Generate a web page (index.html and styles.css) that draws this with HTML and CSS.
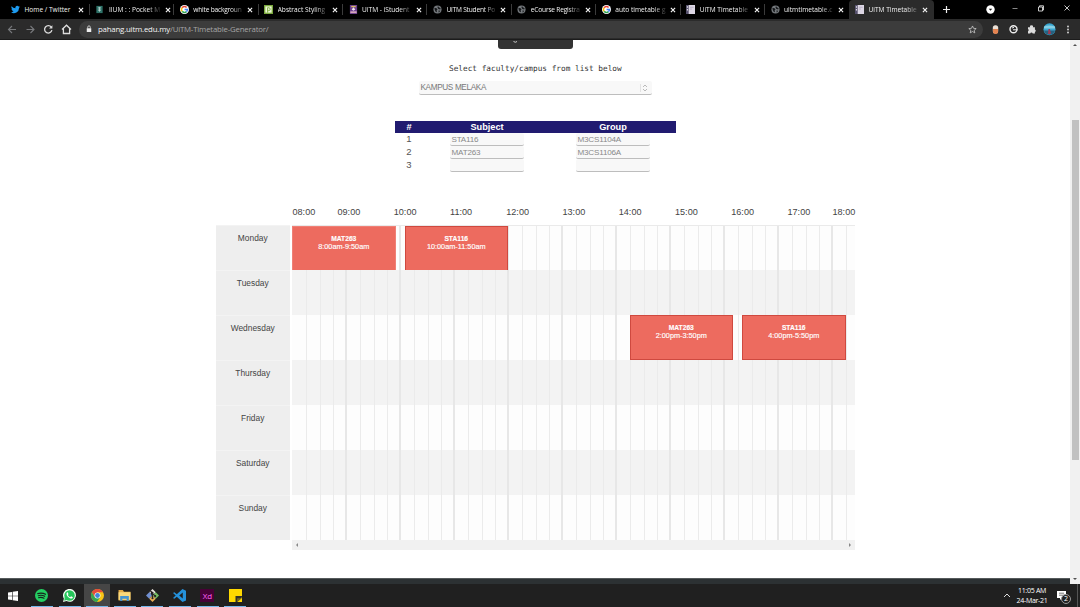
FILE: index.html
```html
<!DOCTYPE html>
<html lang="en">
<head>
<meta charset="utf-8">
<title>UiTM Timetable Generator</title>
<link rel="stylesheet" href="styles.css">
</head>
<body>
<svg class="defs" width="0" height="0">
  <symbol id="google" viewBox="0 0 20 20"><circle cx="10" cy="10" r="10" fill="#fff"/><g fill="none" stroke-width="3.4"><path d="M4.800 6A6.500 6.500 0 0 1 14.600 5.400" stroke="#ea4335"/><path d="M4.800 14A6.500 6.500 0 0 1 4.800 6" stroke="#fbbc05"/><path d="M14.400 14.800A6.500 6.500 0 0 1 4.800 14" stroke="#34a853"/><path d="M10.200 10H16.500A6.500 6.500 0 0 1 14.200 15" stroke="#4285f4"/></g></symbol>
  <symbol id="globe" viewBox="0 0 20 20"><circle cx="10" cy="10" r="9" fill="#74787c"/><path d="M3 6l5 1 2 3-2 2 1 4-3-1-2-4zM11 2l2 3 4 2-1 3-4-1-2-3zM12 12l4 1-3 4z" fill="#17191b"/></symbol>
  <symbol id="page" viewBox="0 0 20 20"><path d="M0 0H20V20H0z" fill="#dcd6e4"/><path d="M0 0H6V20H0z" fill="#55506c"/><path d="M2 3h2v3H2zM2 9h2v3H2z" fill="#fff"/><path d="M9 5h8M9 9h4" stroke="#a79db6" stroke-width="1.500"/></symbol>
  <symbol id="close" viewBox="0 0 10 10"><path d="M1.500 1.500l7 7M8.500 1.500l-7 7" stroke="#f4f4f4" stroke-width="1.900"/></symbol>
</svg>

<header class="browser">
  <div class="tabs">
    <div class="tab"><svg class="fav" viewBox="0 0 24 24"><path fill="#1d9bf0" d="M24 4.600a10 10 0 0 1-2.800.8 5 5 0 0 0 2.100-2.700 10 10 0 0 1-3.100 1.200 4.900 4.900 0 0 0-8.400 4.500A14 14 0 0 1 1.700 3.200a4.900 4.900 0 0 0 1.500 6.500A4.900 4.900 0 0 1 1 9.100a4.900 4.900 0 0 0 3.900 4.900 5 5 0 0 1-2.200.1 4.900 4.900 0 0 0 4.600 3.400A10 10 0 0 1 0 19.500 14 14 0 0 0 21.500 7.100 10 10 0 0 0 24 4.600z"/></svg><span class="title">Home / Twitter</span><svg class="x"><use href="#close"/></svg></div>
    <div class="tab"><svg class="fav" viewBox="0 0 20 20"><path fill="#2e7268" d="M3 2h14v16H3z"/><path d="M7 6h6M7 9h6M7 12h6M10 5v10" stroke="#c9e0dc" stroke-width="1.500"/></svg><span class="title">IIUM : : Pocket M</span><svg class="x"><use href="#close"/></svg></div>
    <div class="tab"><svg class="fav"><use href="#google"/></svg><span class="title tight">white backgroun</span><svg class="x"><use href="#close"/></svg></div>
    <div class="tab"><svg class="fav" viewBox="0 0 20 20"><path fill="#7aa83c" d="M0 0h20v20H0z"/><path fill="#edf8d6" d="M3 3h14v14H3z"/><path d="M8 17V6h2.500a3 3 0 0 1 0 6.500H8" stroke="#7aa83c" stroke-width="2" fill="none"/></svg><span class="title">Abstract Styling</span><svg class="x"><use href="#close"/></svg></div>
    <div class="tab"><svg class="fav" viewBox="0 0 20 20"><path fill="#6b3e8d" d="M2 0h16v20H2z"/><path d="M5 2h10v3H5z" fill="#d8b95c"/><path d="M10 5l4 5-4 3-4-3z" fill="#f1e7f4"/><path d="M3 14h14v4H3z" fill="#d6a6bd"/></svg><span class="title">UiTM - iStudent</span><svg class="x"><use href="#close"/></svg></div>
    <div class="tab"><svg class="fav"><use href="#globe"/></svg><span class="title tight">UiTM Student Po</span><svg class="x"><use href="#close"/></svg></div>
    <div class="tab"><svg class="fav"><use href="#globe"/></svg><span class="title tight">eCourse Registra</span><svg class="x"><use href="#close"/></svg></div>
    <div class="tab"><svg class="fav"><use href="#google"/></svg><span class="title">auto timetable g</span><svg class="x"><use href="#close"/></svg></div>
    <div class="tab"><svg class="fav"><use href="#page"/></svg><span class="title">UiTM Timetable</span><svg class="x"><use href="#close"/></svg></div>
    <div class="tab before-active"><svg class="fav"><use href="#globe"/></svg><span class="title">uitmtimetable.c</span><svg class="x"><use href="#close"/></svg></div>
    <div class="tab active"><svg class="fav"><use href="#page"/></svg><span class="title">UiTM Timetable</span><svg class="x"><use href="#close"/></svg></div>
    <svg class="window-tools" viewBox="934 0 146 19" width="146" height="19">
      <path d="M943 9.500h7M946.500 6v7" stroke="#eee" stroke-width="1.200"/>
      <circle cx="990.500" cy="9.500" r="4.200" fill="#fff"/><path d="M988.800 8.700h3.400l-1.700 2z" fill="#111"/>
      <path d="M1012.500 8.500h5" stroke="#aaa" stroke-width=".8"/>
      <path d="M1038.500 7h4v4h-4zM1039.500 7V5.800h4V10h-1" fill="none" stroke="#ddd" stroke-width=".9"/>
      <path d="M1064.500 5.500l5 5M1069.500 5.500l-5 5" stroke="#ddd" stroke-width=".9"/>
    </svg>
  </div>
  <div class="toolbar">
    <svg class="nav" viewBox="0 19 79 21" width="79" height="21" fill="none">
      <path d="M16 29.500H8.500M12 26l-3.500 3.500L12 33M26.500 29.500H34M30.500 26l3.500 3.500-3.500 3.500" stroke="#77797c" stroke-width="1.100"/>
      <path d="M51.300 27.200A3.700 3.700 0 1 0 51.900 30.200" stroke="#ddd" stroke-width="1.300"/><path d="M52.400 25.200v3.400H49z" fill="#ddd"/>
      <path d="M62 29.500l4.500-4.300 4.500 4.300M63.400 28.500V33.500h6.200V28.500" stroke="#ddd" stroke-width="1.300"/>
    </svg>
    <div class="address">
      <svg class="lock" viewBox="0 0 8 10"><path d="M1 4h6v5H1z" fill="#eee"/><path d="M2.300 4V2.500a1.700 1.700 0 0 1 3.400 0V4" fill="none" stroke="#eee"/></svg>
      <div class="url"><b>pahang.uitm.edu.my</b>/UiTM-Timetable-Generator/</div>
      <svg class="star" viewBox="0 0 24 24"><path d="M12 2.500l2.800 6.400 7 .6-5.300 4.600 1.600 6.900-6.100-3.700L5.900 21l1.600-6.900-5.300-4.600 7-.6z" fill="none" stroke="#d0d0d0" stroke-width="2"/></svg>
    </div>
    <svg class="extensions" viewBox="984 19 96 21" width="96" height="21">
      <rect x="992.800" y="25.200" width="5.400" height="8.400" rx="2.500" fill="#eadfd6"/><path d="M993 29h5v2.500a2.400 2.400 0 0 1-5 0z" fill="#e58350"/>
      <circle cx="1013.500" cy="29.300" r="3.500" fill="none" stroke="#eee" stroke-width="1.400"/><path d="M1013 29.800h4.500M1012 28l2-.6" stroke="#eee"/>
      <path d="M1028 27.200h2.100a1.500 1.500 0 1 1 2.800 0h2v2.200a1.400 1.400 0 0 1 0 2.600v1.500h-2.200a1.300 1.300 0 0 0-2.500 0h-2.200V31.200a1.300 1.300 0 0 0 0-2.300z" fill="#ddd"/>
      <circle cx="1049.500" cy="29.200" r="6" fill="#39a5cf"/><path d="M1044 26.500q5-2 11 0v2h-11z" fill="#85cfe5"/><path d="M1043.800 30.500h11.500a6 6 0 0 1-11.500 0z" fill="#27617f"/><path d="M1048.500 29h1.500l1 5h-3z" fill="#a03b55"/>
      <g fill="#ddd"><circle cx="1068" cy="26.500" r=".9"/><circle cx="1068" cy="29.500" r=".9"/><circle cx="1068" cy="32.500" r=".9"/></g>
    </svg>
  </div>
</header>

<div class="viewport">
  <main class="page">
    <div class="generate"><svg width="75" height="9"><path d="M15.500 1.500q2 1.500 3.500 0" fill="none" stroke="#ccc"/></svg></div>
    <p class="prompt">Select faculty/campus from list below</p>
    <div class="campus"><span>KAMPUS MELAKA</span><svg viewBox="0 0 12 10" width="12" height="10"><path d="M.5 1v8" stroke="#e2e2e2"/><path d="M3 4l2-2 2 2M3 6l2 2 2-2" fill="none" stroke="#aaa" stroke-width=".8"/></svg></div>

    <div class="subjects">
      <div class="subject head"><b>#</b><b>Subject</b><b>Group</b></div>
      <div class="subject"><span>1</span><div class="field">STA116</div><div class="field">M3CS1104A</div></div>
      <div class="subject"><span>2</span><div class="field">MAT263</div><div class="field">M3CS1106A</div></div>
      <div class="subject"><span>3</span><div class="field"></div><div class="field"></div></div>
    </div>

    <section class="timetable">
      <div class="hours"><span>08:00</span><span>09:00</span><span>10:00</span><span>11:00</span><span>12:00</span><span>13:00</span><span>14:00</span><span>15:00</span><span>16:00</span><span>17:00</span><span>18:00</span></div>
      <div class="day"><div class="name">Monday</div><div class="slots"><div class="event pale" style="left:0"><b>MAT263</b>8:00am-9:50am</div><div class="event" style="left:112.500px"><b>STA116</b>10:00am-11:50am</div></div></div>
      <div class="day"><div class="name">Tuesday</div><div class="slots"></div></div>
      <div class="day"><div class="name">Wednesday</div><div class="slots"><div class="event" style="left:337.500px"><b>MAT263</b>2:00pm-3:50pm</div><div class="event" style="left:450px"><b>STA116</b>4:00pm-5:50pm</div></div></div>
      <div class="day"><div class="name">Thursday</div><div class="slots"></div></div>
      <div class="day"><div class="name">Friday</div><div class="slots"></div></div>
      <div class="day"><div class="name">Saturday</div><div class="slots"></div></div>
      <div class="day"><div class="name">Sunday</div><div class="slots"></div></div>
      <div class="hscroll"><svg viewBox="0 0 4 6"><path d="M3 1v4L1 3z"/></svg><svg viewBox="0 0 4 6"><path d="M1 1v4l2-2z"/></svg></div>
    </section>
    <footer class="footer"></footer>
  </main>
  <div class="vscroll"><svg viewBox="0 0 6 4"><path d="M1 3h4L3 1z"/></svg><div class="thumb"></div><svg viewBox="0 0 6 4"><path d="M1 1h4L3 3z"/></svg></div>
</div>

<div class="taskbar">
  <div class="app start"><svg viewBox="0 0 16 16"><path fill="#fff" d="M0 2.300l6.500-.9v6H0zM7.500 1.200L16 0v7.400H7.500zM0 8.500h6.500v6L0 13.700zM7.500 8.500H16V16l-8.500-1.200z"/></svg></div>
  <div class="app open"><svg viewBox="0 0 24 24"><circle cx="12" cy="12" r="12" fill="#24cf62"/><path d="M5 8.500q8-2.200 14.500 1.300M6 12.300q6.500-1.800 12 1.200M6.500 16q5.500-1.500 10.200 1" stroke="#18231c" stroke-width="2" fill="none" stroke-linecap="round"/></svg></div>
  <div class="app open"><svg viewBox="0 0 24 24"><path d="M0 24l1.700-6.200A11.900 11.900 0 1 1 6.400 22.300z" fill="#f5fff5"/><circle cx="12.100" cy="11.900" r="9.700" fill="#25c65a"/><path d="M3.200 15l-.9 6.500 6-1.600z" fill="#25c65a"/><path d="M8 5.800c-3 2.200-.8 6.700 2 9.200 2.800 2.700 6.500 4 8 1.200.5-1-.2-1.600-3-2.700-.8-.1-1.200 1.800-2 1.500-2-.8-3.300-2.400-4-4 .2-.6 1.200-1 1-1.800-.8-2.600-1.200-3.400-2-3.400z" fill="#fff"/></svg></div>
  <div class="app open current"><svg viewBox="0 0 24 24"><circle cx="12" cy="12" r="12" fill="#f9c515"/><path d="M1.600 6A12 12 0 0 1 22.400 6H12L7 15z" fill="#e54b3c"/><path d="M1.600 6a12 12 0 0 0 9.400 18l6-9-10 0z" fill="#35a653"/><circle cx="12" cy="12" r="5.500" fill="#fff"/><circle cx="12" cy="12" r="4.400" fill="#4285d8"/></svg></div>
  <div class="app open"><svg viewBox="0 0 24 24"><path d="M1 2h8l2 3h12v16H1z" fill="#e4ac45"/><path d="M1 6h22v14H1z" fill="#fbd97b"/><path d="M4 13h16v9h-4v-4H8v4H4z" fill="#4795d0"/></svg></div>
  <div class="app open"><svg viewBox="0 0 24 24"><path d="M12 0l6 6-6 6-6-6z" fill="#e8e5df"/><path d="M6 6l6 6-6 6-6-6z" fill="#708fd0"/><path d="M18 6l6 6-6 6-6-6z" fill="#75bd63"/><path d="M12 12l6 6-6 6-6-6z" fill="#e8ae56"/><path d="M8 3l4 4v10M12 8l5 5" stroke="#282225" stroke-width="2"/><g fill="#282225"><circle cx="12" cy="7" r="2"/><circle cx="12" cy="17" r="2"/><circle cx="17" cy="13" r="2"/></g></svg></div>
  <div class="app open"><svg viewBox="0 0 24 24"><path d="M17.500 0L24 3v18l-6.500 3L7 14.200 2.500 18 0 16.500 5 12 0 7.500 2.500 6 7 9.800zM18 6.500L11.500 12l6.500 5.500z" fill="#2592dc" fill-rule="evenodd"/></svg></div>
  <div class="app open"><div class="xd">Xd</div></div>
  <div class="app open"><svg viewBox="0 0 24 24"><path d="M0 0h24v24H0z" fill="#ffd900"/><path d="M12 13h12v2l-9 9h-3z" fill="#333229"/><path d="M15 24v-7h9z" fill="#77691d"/></svg></div>
  <div class="tray">
    <svg viewBox="0 0 8 5" width="8" height="5"><path d="M1 4l3-3 3 3" fill="none" stroke="#ddd"/></svg>
    <div class="clock"><div>11:05 AM</div><div>24-Mar-21</div></div>
    <div class="notice"><svg viewBox="0 0 10 10" width="10" height="10"><path d="M0 0h9v7H5L3 9V7H0z" fill="#fff"/><path d="M2 2.200h5M2 4.200h5" stroke="#555" stroke-width=".8"/></svg><i>2</i></div>
    <div class="peek"></div>
  </div>
</div>
</body>
</html>
```
FILE: styles.css
```css
* { box-sizing: border-box; }
body { margin: 0; width: 1080px; height: 607px; overflow: hidden; display: flex; flex-direction: column; background: #fff; font-family: "Liberation Sans", Arial, sans-serif; }
svg { display: block; flex: none; }
.defs { display: none; }

.browser { flex: none; height: 40px; background: #2b2b2b; border-bottom: 1px solid #1c1c1c; }
.tabs { display: flex; height: 19px; background: #000; padding-left: 5.500px; font: 6.600px "Open Sans", sans-serif; color: #f2f2f2; }
.tab { flex: none; width: 84.400px; height: 19px; padding: 0 5.500px 0 5.500px; display: flex; align-items: center; position: relative; }
.tab::after { content: ""; position: absolute; right: 0; top: 4px; width: 1px; height: 11px; background: #3b3b3b; }
.tab.active::after, .tab.before-active::after { display: none; }
.tab.active { background: #2b2b2b; border-radius: 4px 4px 0 0; }
.fav { width: 9px; height: 9px; margin-right: 4.500px; }
.title { flex: 1; white-space: nowrap; -webkit-mask-image: linear-gradient(90deg, #000 75%, rgba(0,0,0,.15)); mask-image: linear-gradient(90deg, #000 75%, rgba(0,0,0,.15)); }
.title.tight { letter-spacing: -.200px; }
.tab:first-child .title { -webkit-mask-image: none; mask-image: none; }
.x { width: 6px; height: 6px; margin-left: 4.500px; }
.window-tools { margin-left: auto; }
.toolbar { display: flex; height: 20px; }
.address { width: 904px; height: 16.500px; margin-top: 2px; border-radius: 9px; background: #3c3c3c; display: flex; align-items: center; padding: 0 6px 0 7px; color: #a6a6a6; }
.lock { width: 6px; height: 8px; margin-right: 6px; }
.url { flex: 1; font: 7.800px "Open Sans", sans-serif; letter-spacing: -.180px; }
.url b { font-weight: 400; color: #f4f4f4; }
.star { width: 9px; height: 9px; }
.extensions { margin-left: 1px; }

.viewport { height: 544px; display: flex; }
.page { width: 1070px; display: flex; flex-direction: column; background: #fff; }
.generate { width: 75px; height: 9px; margin-left: 498px; border-radius: 0 0 3px 3px; background: #333; }
.prompt { margin: 14px 0 0 449px; height: 12px; font: 7.750px/12px "DejaVu Sans Mono", monospace; color: #333; white-space: nowrap; }
.campus { width: 233px; height: 14px; margin: 6px 0 0 419px; background: #f8f8f8; border-bottom: 1.500px solid #bdbdbd; border-radius: 2px; display: flex; justify-content: space-between; align-items: center; font-size: 8.200px; letter-spacing: -.350px; color: #777; padding-left: 1.500px; }
.subjects { width: 281px; margin: 26px 0 0 395px; }
.subject { height: 12.800px; display: grid; grid-template-columns: 28px 27px 74px 52px 74px; grid-template-areas: "n . s . g"; align-items: start; font-size: 9.500px; line-height: 12px; color: #555; }
.subject > :nth-child(1) { grid-area: n; text-align: center; }
.subject > :nth-child(2) { grid-area: s; }
.subject > :nth-child(3) { grid-area: g; }
.subject.head { height: 12px; background: #211b70; color: #fff; font-size: 9.200px; line-height: 12px; }
.head b { text-align: center; }
.field { height: 13px; background: #f8f8f8; border-bottom: 1px solid #bdbdbd; border-radius: 2px; padding-left: 1.500px; font-size: 8.100px; letter-spacing: -.200px; line-height: 13px; color: #888; }

.timetable { width: 639.500px; margin: 35px 0 0 215.500px; }
.hours { height: 19px; padding-left: 77px; display: grid; grid-template-columns: 45px repeat(8, 56.250px) 45px 30px; font-size: 9.100px; line-height: 12px; color: #444; white-space: nowrap; }
.day { display: flex; gap: 2px; height: 45px; }
.name { width: 74.500px; background: #eee; border-top: 1px solid #f3f3f3; text-align: center; font-size: 8.400px; line-height: 25px; color: #444; }
.slots { position: relative; width: 563px; background-color: #fdfdfd; background-image: repeating-linear-gradient(90deg, transparent 0 13px, #ebebeb 13px 14px, transparent 14px 27px, #ebebeb 27px 28px, transparent 28px 40px, #ebebeb 40px 41px, transparent 41px 52px, #e7e7e7 52px 54px); background-position: 1px 0; }
.day:nth-child(2) .slots { border-top: 1px solid #eaeaea; }
.day:nth-child(odd) .slots { background-color: #f3f3f3; }
.event { position: absolute; top: 0; width: 103.500px; height: 44.500px; padding-top: 8px; background: #ed6b5f; border: 1px solid #cf493f; color: #fff; text-align: center; font-size: 7.300px; line-height: 8px; -webkit-text-stroke: .15px #fff; }
.event.pale { border-color: #ef8076; }
.event b { display: block; font-size: 6.700px; }
.hscroll { width: 563px; height: 10px; margin-left: 76.500px; background: #f1f1f1; display: flex; justify-content: space-between; align-items: center; padding: 0 3px; fill: #888; }
.hscroll svg { width: 4px; height: 6px; }
.footer { height: 6px; margin-top: auto; background: #2c3133; border-top: 1px solid #555a5b; }
.vscroll { width: 10px; background: #f1f1f1; display: flex; flex-direction: column; align-items: center; padding: 3px 0; fill: #505050; }
.vscroll svg { width: 6px; height: 4px; }
.thumb { width: 7px; height: 340px; margin: 73px 0 auto; background: #c1c1c1; }

.taskbar { height: 23px; background: #202020; display: flex; }
.app { width: 27.600px; padding: 0 2.500px 0 3.500px; display: flex; flex-direction: column; align-items: center; position: relative; }
.app > svg { width: 13px; height: 13px; margin-top: 5px; }
.app.start { padding: 0 3px 0 2px; }
.app.start > svg { width: 10px; height: 10px; margin-top: 7px; }
.app.open::after { content: ""; position: absolute; left: 3.500px; right: 2.100px; bottom: 0; height: 1.500px; background: #76b9ed; }
.app.current { background: linear-gradient(#464646, #464646) 1px 0 / 26px 100% no-repeat; }
.xd { width: 14px; height: 13px; margin-top: 5px; background: #470137; color: #ff61f6; font: 8px/13px "Open Sans", sans-serif; text-align: center; }
.tray { margin-left: auto; display: flex; align-items: center; color: #fff; }
.clock { width: 42px; font: 7px/10px "Open Sans", sans-serif; letter-spacing: -.280px; text-align: center; }
.notice { position: relative; margin-left: 4px; width: 20px; padding-top: 1px; }
.notice i { position: absolute; left: 4px; top: 3.500px; width: 10px; height: 10px; border: 1px solid #999; border-radius: 50%; background: #222; font: 7px/8px "Open Sans", sans-serif; text-align: center; }
.peek { width: 3px; height: 23px; border-left: 1px solid #555; }
```
